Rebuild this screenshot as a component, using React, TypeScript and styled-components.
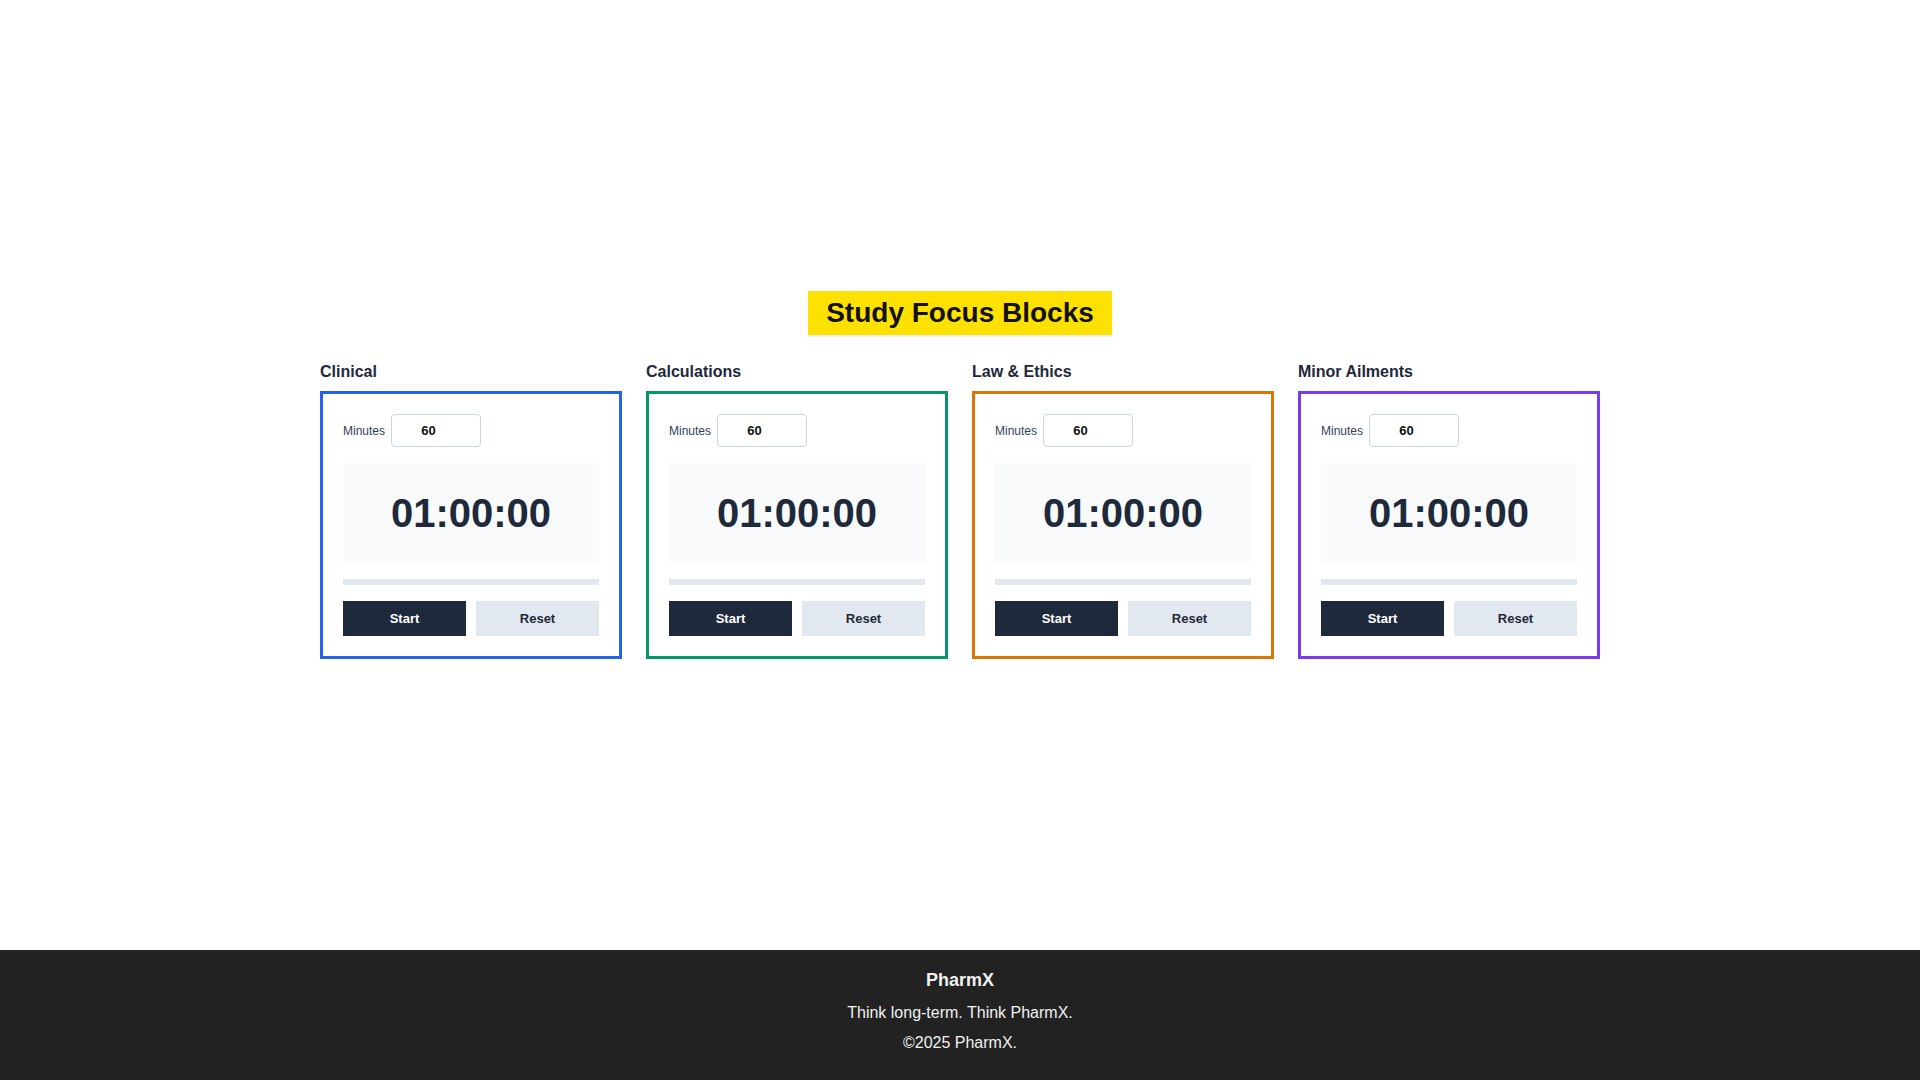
import React, { FC, useEffect, useState } from "react"
import styled, { createGlobalStyle } from "styled-components"

const GlobalStyle = createGlobalStyle`
  * {
    box-sizing: border-box;
  }
  html,
  body {
    margin: 0;
    padding: 0;
    background: #fff;
    font-family: "Liberation Sans", Arial, sans-serif;
  }
`

type Block = {
  title: string
  color: string
}

const blocks: Block[] = [
  { title: "Clinical", color: "#2563eb" },
  { title: "Calculations", color: "#059669" },
  { title: "Law & Ethics", color: "#d97706" },
  { title: "Minor Ailments", color: "#7c3aed" },
]

const format = (total: number) => {
  const h = Math.floor(total / 3600)
  const m = Math.floor((total % 3600) / 60)
  const s = total % 60
  return [h, m, s].map(n => String(n).padStart(2, "0")).join(":")
}

const FocusBlock: FC<Block> = ({ title, color }) => {
  const [minutes, setMinutes] = useState(60)
  const [left, setLeft] = useState(60 * 60)
  const [running, setRunning] = useState(false)

  useEffect(() => {
    if (!running) return
    const id = setInterval(() => setLeft(l => (l > 0 ? l - 1 : 0)), 1000)
    return () => clearInterval(id)
  }, [running])

  const total = minutes * 60
  const progress = total > 0 ? ((total - left) / total) * 100 : 0

  return (
    <Column>
      <BlockTitle>{title}</BlockTitle>
      <Card $accent={color}>
        <MinutesRow>
          <MinutesLabel>Minutes</MinutesLabel>
          <MinutesInput
            type="number"
            value={minutes}
            onChange={e => {
              const v = Number(e.target.value) || 0
              setMinutes(v)
              if (!running) setLeft(v * 60)
            }}
          />
        </MinutesRow>
        <TimerBox>{format(left)}</TimerBox>
        <Track>
          <Fill style={{ width: `${progress}%` }} $accent={color} />
        </Track>
        <Buttons>
          <ActionButton $primary onClick={() => setRunning(r => !r)}>
            {running ? "Pause" : "Start"}
          </ActionButton>
          <ActionButton
            onClick={() => {
              setRunning(false)
              setLeft(minutes * 60)
            }}
          >
            Reset
          </ActionButton>
        </Buttons>
      </Card>
    </Column>
  )
}

const App: FC = () => (
  <>
    <GlobalStyle />
    <Page>
      <Main>
        <Heading>Study Focus Blocks</Heading>
        <Grid>
          {blocks.map(b => (
            <FocusBlock key={b.title} {...b} />
          ))}
        </Grid>
      </Main>
      <Footer>
        <Brand>PharmX</Brand>
        <FooterLine>Think long-term. Think PharmX.</FooterLine>
        <FooterLine $last>©2025 PharmX.</FooterLine>
      </Footer>
    </Page>
  </>
)

export default App

const Page = styled.div`
  min-height: 100vh;
  display: flex;
  flex-direction: column;
`

const Main = styled.main`
  flex: 1;
  display: flex;
  flex-direction: column;
  align-items: center;
  justify-content: center;
`

const Heading = styled.h1`
  margin: 0 0 28px;
  padding: 6px 18px;
  background: #ffe100;
  color: #111;
  font-size: 28px;
  font-weight: 700;
  line-height: normal;
  box-shadow: 0 2px 0 #eef0f2;
`

const Grid = styled.div`
  width: 1280px;
  display: grid;
  grid-template-columns: repeat(4, 1fr);
  gap: 24px;
`

const Column = styled.section`
  display: flex;
  flex-direction: column;
`

const BlockTitle = styled.h2`
  margin: 0 0 10px;
  font-size: 16px;
  font-weight: 700;
  line-height: normal;
  color: #1e293b;
`

const Card = styled.div<{ $accent: string }>`
  border: 3px solid ${p => p.$accent};
  padding: 20px;
  display: flex;
  flex-direction: column;
  gap: 16px;
  background: #fff;
`

const MinutesRow = styled.div`
  display: flex;
  align-items: center;
  gap: 6px;
`

const MinutesLabel = styled.label`
  font-size: 12px;
  color: #334155;
`

const MinutesInput = styled.input`
  width: 90px;
  height: 33px;
  padding: 0 6px;
  border: 1px solid #cbd5e1;
  border-radius: 4px;
  font-family: "Liberation Sans", Arial, sans-serif;
  font-size: 13px;
  font-weight: 700;
  color: #111;
  text-align: center;
  background: #fff;
`

const TimerBox = styled.div`
  height: 100px;
  display: flex;
  align-items: center;
  justify-content: center;
  background: #f8fafc;
  color: #1e293b;
  font-size: 40px;
  font-weight: 700;
`

const Track = styled.div`
  height: 6px;
  background: #e2e8f0;
`

const Fill = styled.div<{ $accent: string }>`
  height: 100%;
  background: ${p => p.$accent};
`

const Buttons = styled.div`
  display: grid;
  grid-template-columns: 1fr 1fr;
  gap: 10px;
`

const ActionButton = styled.button<{ $primary?: boolean }>`
  height: 35px;
  border: none;
  border-radius: 0;
  cursor: pointer;
  font-family: "Liberation Sans", Arial, sans-serif;
  font-size: 13px;
  font-weight: 700;
  background: ${p => (p.$primary ? "#1e293b" : "#e2e8f0")};
  color: ${p => (p.$primary ? "#fff" : "#1e293b")};
`

const Footer = styled.footer`
  background: #222;
  color: #f1f1f1;
  text-align: center;
  padding: 20px 0 28px;
`

const Brand = styled.div`
  font-size: 18px;
  font-weight: 700;
  margin-bottom: 13px;
`

const FooterLine = styled.p<{ $last?: boolean }>`
  margin: 0 0 ${p => (p.$last ? "0" : "12px")};
  font-size: 16px;
`
